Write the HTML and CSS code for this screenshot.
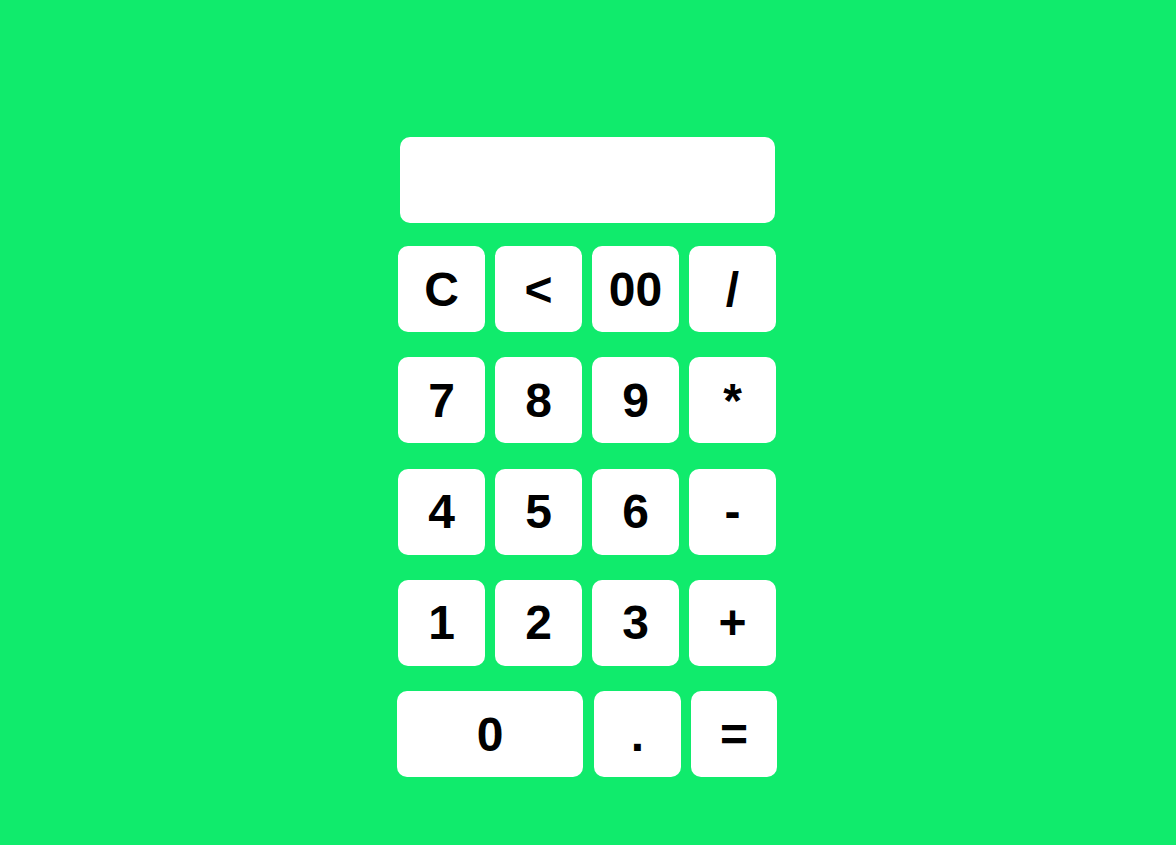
FILE: index.html
```html
<!DOCTYPE html>
<html lang="en">
<head>
<meta charset="utf-8">
<title>Calculator</title>
<link rel="stylesheet" href="styles.css">
</head>
<body>
<div class="calc">
  <div class="display"></div>
  <div class="keys">
    <div class="row">
      <button class="key">C</button>
      <button class="key">&lt;</button>
      <button class="key">00</button>
      <button class="key">/</button>
    </div>
    <div class="row">
      <button class="key">7</button>
      <button class="key">8</button>
      <button class="key">9</button>
      <button class="key">*</button>
    </div>
    <div class="row">
      <button class="key">4</button>
      <button class="key">5</button>
      <button class="key">6</button>
      <button class="key">-</button>
    </div>
    <div class="row">
      <button class="key">1</button>
      <button class="key">2</button>
      <button class="key">3</button>
      <button class="key">+</button>
    </div>
    <div class="row row-last">
      <button class="key key-wide">0</button>
      <button class="key key-dot">.</button>
      <button class="key key-eq">=</button>
    </div>
  </div>
</div>
</body>
</html>
```

FILE: styles.css
```css
html, body {
  margin: 0;
  padding: 0;
}
body {
  background: #10eb6c;
  width: 1176px;
  height: 845px;
  overflow: hidden;
  font-family: "Liberation Sans", Arial, sans-serif;
}
.calc {
  width: 380px;
  margin: 0 auto;
  padding-top: 137px;
  display: flex;
  flex-direction: column;
}
.display {
  width: 375px;
  height: 86px;
  margin-left: 2px;
  background: #fff;
  border-radius: 10px;
}
.keys {
  margin-top: 23px;
  display: flex;
  flex-direction: column;
  gap: 25.25px;
}
.row {
  display: flex;
  gap: 10px;
}
.key {
  width: 87px;
  height: 86px;
  border: none;
  border-radius: 10px;
  background: #fff;
  color: #000;
  font-family: "Liberation Sans", Arial, sans-serif;
  font-weight: bold;
  font-size: 48px;
  padding: 0;
  margin: 0;
  display: flex;
  align-items: center;
  justify-content: center;
}
.row-last {
  margin-left: -1px;
}
.key-wide {
  width: 186px;
}
.key-dot {
  margin-left: 1px;
}
.key-eq {
  width: 86px;
}
```
